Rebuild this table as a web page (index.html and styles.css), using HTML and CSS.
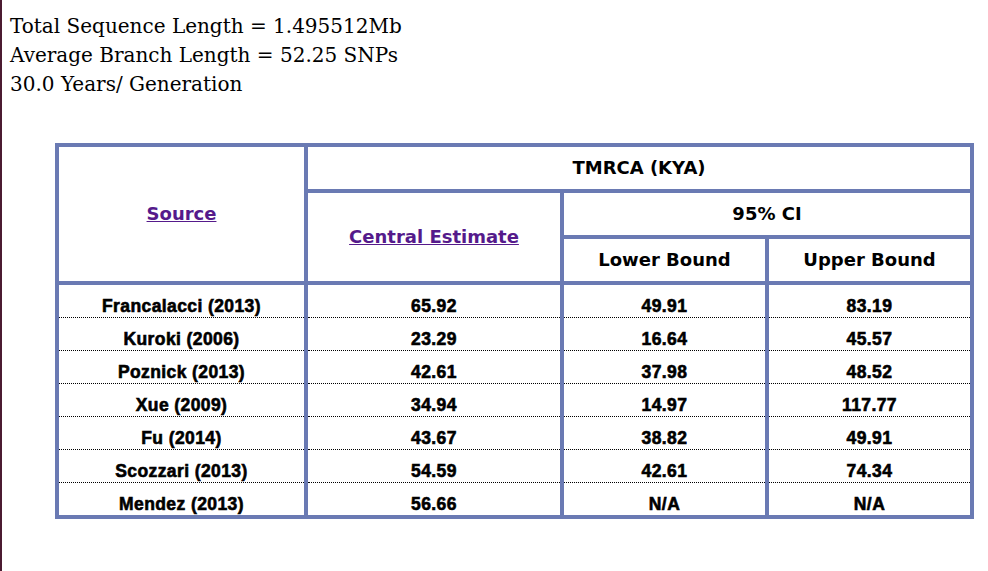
FILE: index.html
```html
<!DOCTYPE html>
<html>
<head>
<meta charset="utf-8">
<title>TMRCA</title>
<link rel="stylesheet" href="styles.css">
</head>
<body>
<div class="stats">
Total Sequence Length = 1.495512Mb<br>
Average Branch Length = 52.25 SNPs<br>
30.0 Years/ Generation
</div>
<table class="tmrca">
<colgroup>
<col class="c1"><col class="c2"><col class="c3"><col class="c4">
</colgroup>
<thead>
<tr>
<th rowspan="3"><a href="#source">Source</a></th>
<th colspan="3">TMRCA (KYA)</th>
</tr>
<tr>
<th rowspan="2"><a href="#central">Central Estimate</a></th>
<th colspan="2">95% CI</th>
</tr>
<tr>
<th>Lower Bound</th>
<th>Upper Bound</th>
</tr>
</thead>
<tbody>
<tr><td>Francalacci (2013)</td><td>65.92</td><td>49.91</td><td>83.19</td></tr>
<tr><td>Kuroki (2006)</td><td>23.29</td><td>16.64</td><td>45.57</td></tr>
<tr><td>Poznick (2013)</td><td>42.61</td><td>37.98</td><td>48.52</td></tr>
<tr><td>Xue (2009)</td><td>34.94</td><td>14.97</td><td>117.77</td></tr>
<tr><td>Fu (2014)</td><td>43.67</td><td>38.82</td><td>49.91</td></tr>
<tr><td>Scozzari (2013)</td><td>54.59</td><td>42.61</td><td>74.34</td></tr>
<tr><td>Mendez (2013)</td><td>56.66</td><td>N/A</td><td>N/A</td></tr>
</tbody>
</table>
</body>
</html>
```
FILE: styles.css
```css
html {
  border-left: 2px solid #4b1b31;
  min-height: 100%;
  background: #fff;
}
body {
  margin: 0;
  padding: 12px 8px 8px 8px;
  font-family: "DejaVu Serif", serif;
  color: #000;
}
.stats {
  font-size: 20px;
  line-height: 29px;
}
.tmrca {
  margin: 44px 0 0 45px;
  border-collapse: collapse;
  table-layout: fixed;
  width: 915px;
}
.c1 { width: 249px; }
.c2 { width: 256px; }
.c3 { width: 205px; }
.c4 { width: 205px; }
.tmrca th {
  border: 4px solid #6a7ab3;
  font-family: "DejaVu Sans", sans-serif;
  font-weight: bold;
  font-size: 18px;
  line-height: 42px;
  padding: 0;
  text-align: center;
  vertical-align: middle;
}
.tmrca th a {
  color: #551a8b;
  text-decoration: underline;
}
.tmrca td {
  border-left: 4px solid #6a7ab3;
  border-right: 4px solid #6a7ab3;
  border-bottom: 1px dotted #000;
  font-family: "Liberation Sans", Arial, sans-serif;
  font-weight: bold;
  font-size: 17.5px;
  letter-spacing: 0.4px;
  -webkit-text-stroke: 0.6px #000;
  line-height: 22px;
  padding: 10px 0 0 0;
  text-align: center;
}
.tmrca tbody tr:last-child td {
  border-bottom: 4px solid #6a7ab3;
}
```
